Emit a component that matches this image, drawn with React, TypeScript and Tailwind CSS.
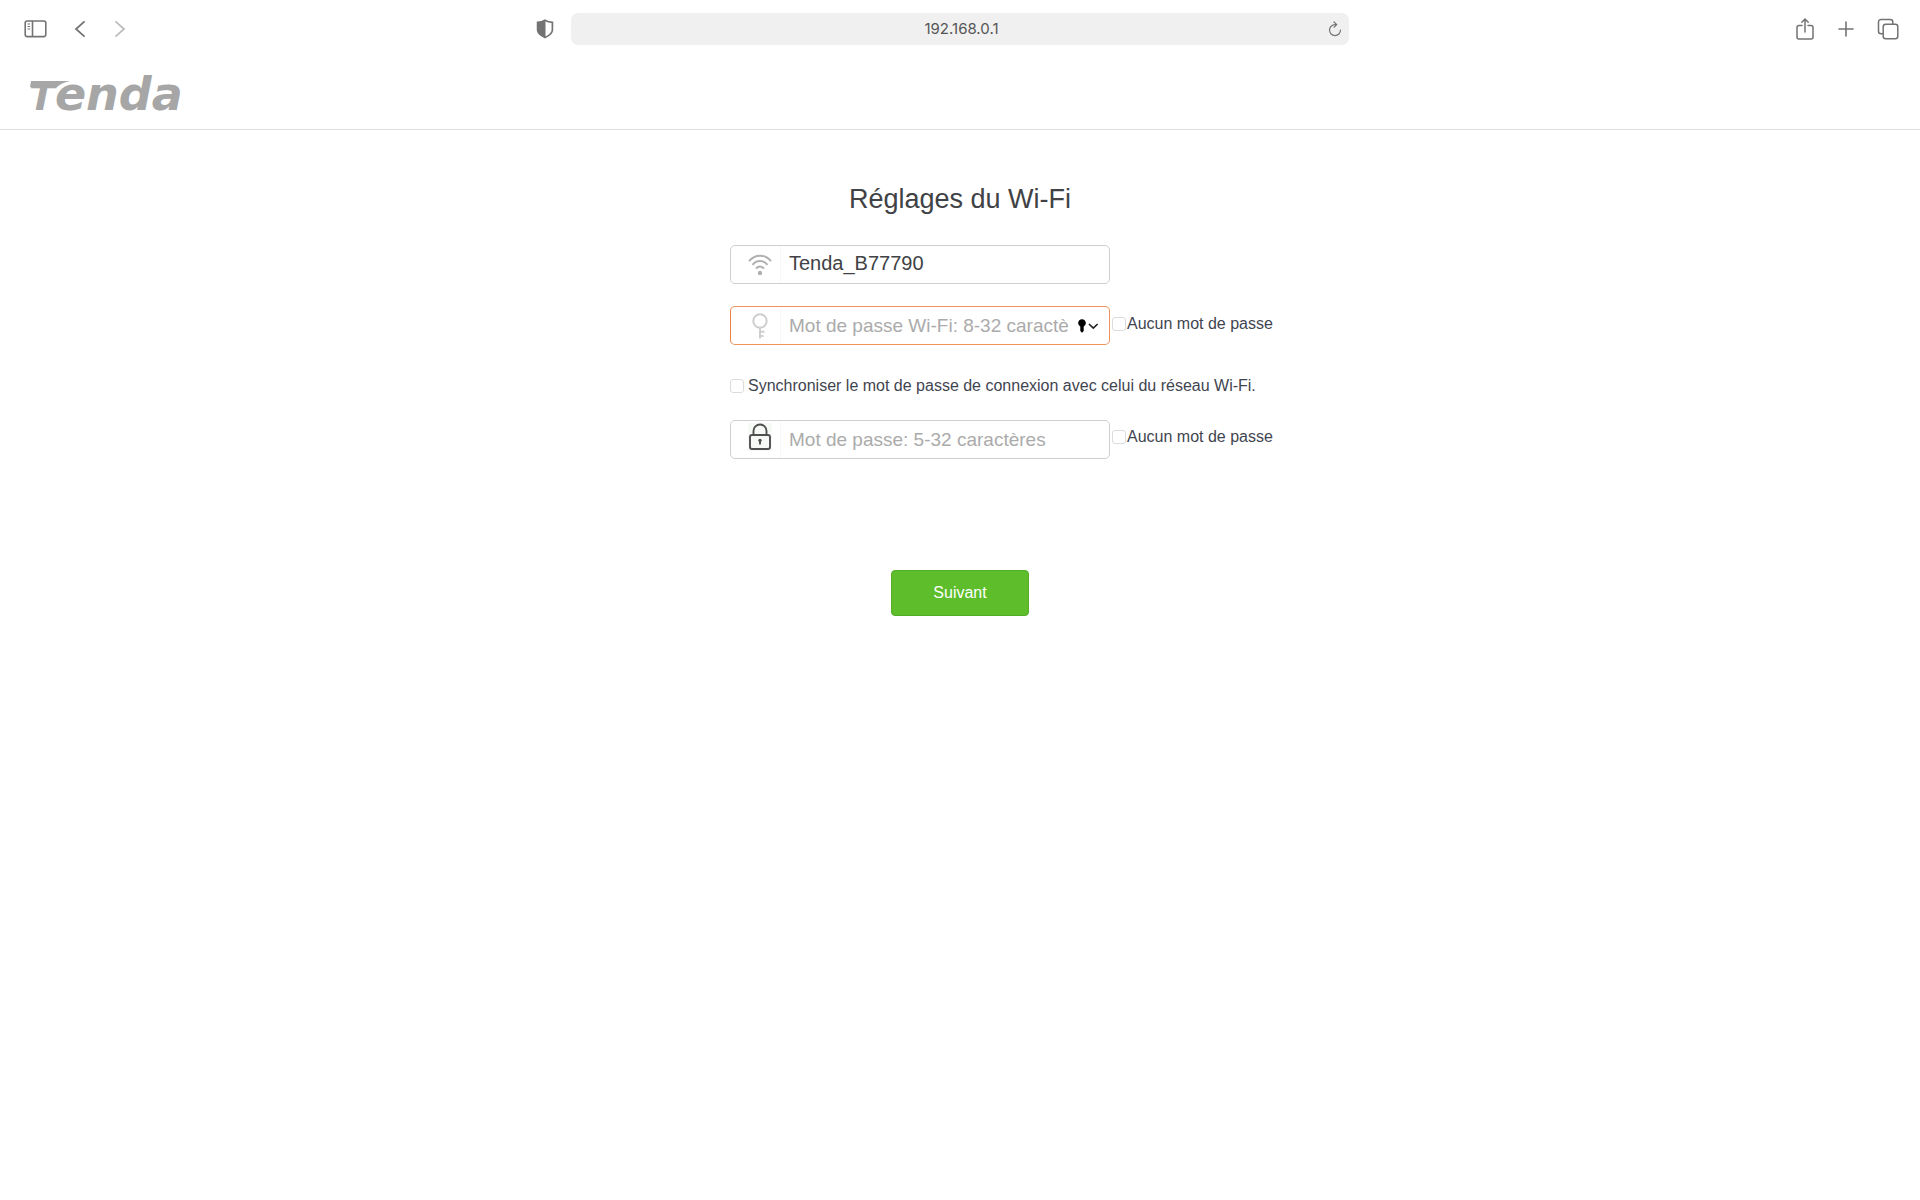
import React from "react";

type IconProps = { className?: string };

const SidebarIcon = ({ className }: IconProps) => (
  <svg viewBox="0 0 24 20" className={className} fill="none" stroke="currentColor" strokeWidth="1.6">
    <rect x="1.2" y="2" width="20.6" height="15.6" rx="2" />
    <path d="M8.500 2v15.600" />
    <path d="M3.500 5h2.600M3.500 7.500h2.600M3.500 10h2.600" strokeWidth="1.200" />
  </svg>
);

const ChevronIcon = ({ className }: IconProps) => (
  <svg viewBox="0 0 12 18" className={className} fill="none" stroke="currentColor" strokeWidth="1.8" strokeLinecap="round">
    <path d="M10 1.8L2 9l8 7.2" />
  </svg>
);

const ShieldIcon = ({ className }: IconProps) => (
  <svg viewBox="0 0 18 20" className={className}>
    <path d="M9 1.2C7 2.4 4 3.2 1.6 3.4V11c0 3.4 4 6 7.4 7.6 3.4-1.6 7.4-4.2 7.4-7.6V3.4C14 3.2 11 2.4 9 1.2z" fill="none" stroke="currentColor" strokeWidth="1.7" />
    <path d="M9.500 1.200C7 2.400 4 3.200 1.600 3.400V11c0 3.400 4 6 7.900 7.600z" fill="currentColor" />
  </svg>
);

const ReloadIcon = ({ className }: IconProps) => (
  <svg viewBox="0 0 14 16" className={className} fill="none" stroke="currentColor" strokeWidth="1.2" strokeLinecap="round" strokeLinejoin="round">
    <path d="M8.6 3.6H7a5.5 5.5 0 1 0 5.5 5.5M6 1l2.8 2.6L6 6.2" />
  </svg>
);

const ShareIcon = ({ className }: IconProps) => (
  <svg viewBox="0 0 18 22" className={className} fill="none" stroke="currentColor" strokeWidth="1.5" strokeLinecap="round" strokeLinejoin="round">
    <path d="M6 7.5H3a2 2 0 0 0-2 2V19a2 2 0 0 0 2 2h12a2 2 0 0 0 2-2V9.5a2 2 0 0 0-2-2h-3M9 14V1.2M5.8 4.2L9 1l3.2 3.2" />
  </svg>
);

const PlusIcon = ({ className }: IconProps) => (
  <svg viewBox="0 0 16 16" className={className} fill="none" stroke="currentColor" strokeWidth="1.6" strokeLinecap="round">
    <path d="M8 1v14M1 8h14" />
  </svg>
);

const TabsIcon = ({ className }: IconProps) => (
  <svg viewBox="0 0 22 22" className={className} fill="none" stroke="currentColor" strokeWidth="1.5">
    <rect x="6.2" y="6.2" width="14.6" height="14.6" rx="2.5" />
    <path d="M6.2 15.8H4a2.5 2.5 0 0 1-2.5-2.5V4A2.5 2.5 0 0 1 4 1.5h9.3A2.5 2.5 0 0 1 15.800 4v2.200" />
  </svg>
);

const WifiIcon = ({ className }: IconProps) => (
  <svg viewBox="0 0 24 22" className={className} fill="none" stroke="currentColor" strokeWidth="2">
    <path d="M1 7.2C7-0.2 17-0.2 23 7.2M4.5 10.8c4.2-5 10.8-5 15 0M8 14.6c2.4-2.8 5.6-2.8 8 0" />
    <circle cx="12" cy="19" r="2.2" fill="currentColor" stroke="none" />
  </svg>
);

const KeyIcon = ({ className }: IconProps) => (
  <svg viewBox="0 0 16 26" className={className} fill="none" stroke="currentColor" strokeWidth="2">
    <circle cx="8" cy="8" r="6.700" />
    <path d="M8 14.7V25.5M8 18.8h4.500M8 23h3.500" />
  </svg>
);

const LockIcon = ({ className }: IconProps) => (
  <svg viewBox="0 0 24 28" className={className} fill="none" stroke="currentColor" strokeWidth="1.9">
    <rect x="2" y="12" width="20" height="14" rx="2" />
    <path d="M5.500 12V8a6.500 6.500 0 0 1 13 0v4" />
    <circle cx="12" cy="17.500" r="1.700" fill="currentColor" stroke="none" />
    <path d="M12 17.500v4" />
  </svg>
);

const AutofillIcon = ({ className }: IconProps) => (
  <svg viewBox="0 0 20 14" className={className}>
    <path d="M4 0.3a3.800 3.800 0 0 1 1.700 7.200v4.600L4 13.700l-1.700-1.600V7.500A3.800 3.800 0 0 1 4 0.300z" fill="#000" />
    <path d="M11.500 5.500l3.800 3.600 3.800-3.600" fill="none" stroke="#222" strokeWidth="1.700" strokeLinecap="round" />
  </svg>
);

type FieldProps = {
  label: string;
  icon: React.ReactNode;
  border: string;
  trailing?: React.ReactNode;
  defaultValue?: string;
  placeholder?: string;
  text: string;
};

const Field = ({ label, icon, border, trailing, defaultValue, placeholder, text }: FieldProps) => (
  <div className={`flex h-[39px] w-[380px] shrink-0 items-center rounded-[5px] border bg-white ${border}`}>
    <span className="flex h-full w-[50px] shrink-0 items-center justify-end border-r border-[#f8f8f8] pr-2">{icon}</span>
    <input
      type="text"
      aria-label={label}
      defaultValue={defaultValue}
      placeholder={placeholder}
      className={`h-full min-w-0 flex-1 bg-transparent pl-2 text-[#404245] outline-none placeholder:text-[#ababab] ${text}`}
    />
    {trailing}
  </div>
);

const Check = ({ children, gap }: { children: string; gap: string }) => (
  <label className={`flex items-center whitespace-nowrap text-base leading-5 text-[#3f4550] ${gap}`}>
    <input type="checkbox" className="size-[14px] shrink-0 appearance-none rounded-[3px] border border-[#dcdcdc] bg-white" />
    {children}
  </label>
);

export default function App() {
  return (
    <div className="min-h-screen bg-white font-['Liberation_Sans',Arial,sans-serif]">
      <nav className="grid h-[58px] grid-cols-[1fr_minmax(0,778px)_1fr] items-center text-[#737373]">
        <div className="flex items-center pl-6">
          <button type="button" aria-label="Sidebar"><SidebarIcon className="h-5 w-6" /></button>
          <button type="button" aria-label="Back" className="ml-[26px]"><ChevronIcon className="h-[18px] w-3" /></button>
          <button type="button" aria-label="Forward" className="ml-7 text-[#bdbdbd]"><ChevronIcon className="h-[18px] w-3 rotate-180" /></button>
          <button type="button" aria-label="Privacy report" className="mr-[17px] ml-auto"><ShieldIcon className="h-5 w-[18px]" /></button>
        </div>
        <div className="flex h-8 items-center rounded-[7px] bg-[#f0f0f0] pr-[7px] pl-6">
          <input
            type="text"
            aria-label="Address"
            defaultValue="192.168.0.1"
            className="min-w-0 flex-1 bg-transparent text-center font-[Inter,sans-serif] text-[15px] text-[#555] outline-none"
          />
          <button type="button" aria-label="Reload"><ReloadIcon className="h-4 w-[14px]" /></button>
        </div>
        <div className="flex items-center justify-end pr-[21px]">
          <button type="button" aria-label="Share"><ShareIcon className="h-[22px] w-[18px]" /></button>
          <button type="button" aria-label="New tab" className="ml-6"><PlusIcon className="size-4" /></button>
          <button type="button" aria-label="Tabs" className="ml-[23px]"><TabsIcon className="size-[22px]" /></button>
        </div>
      </nav>

      <header className="flex h-[72px] items-center border-b border-[#dfdfdf] pt-1 pl-[29px]">
        <a href="#" className="relative flex items-baseline font-['DejaVu_Sans',sans-serif] font-bold text-[#a6a6a6] italic">
          <span className="text-[38px] leading-[44px]">T</span>
          <span className="text-[46px] leading-[44px]">enda</span>
          <svg viewBox="0 0 40 6" className="absolute top-[9px] left-px h-[6px] w-10" fill="currentColor" aria-hidden="true">
            <path d="M1 0h39c-5 1-10 3-13 6H0z" />
          </svg>
        </a>
      </header>

      <main className="mx-auto flex w-[460px] flex-col pt-[51px]">
        <h1 className="text-center text-[27px] leading-9 text-[#404245]">Réglages du Wi-Fi</h1>
        <form className="flex flex-col">
          <div className="mt-7 flex">
            <Field
              label="Nom du réseau Wi-Fi"
              border="border-[#cfcfcf]"
              text="pb-[2px] text-[20px]"
              defaultValue="Tenda_B77790"
              icon={<WifiIcon className="h-[22px] w-6 text-[#b0b0b0]" />}
            />
          </div>
          <div className="mt-[22px] flex items-start gap-[2px]">
            <Field
              label="Mot de passe Wi-Fi"
              border="border-[#f0935c] border-l-[#ee8040]"
              text="pt-px text-[19px]"
              placeholder="Mot de passe Wi-Fi: 8-32 caractères"
              icon={<KeyIcon className="mr-1 h-[26px] w-4 text-[#cfcfcf]" />}
              trailing={<button type="button" aria-label="Remplissage automatique" className="mr-[11px] ml-[9px]"><AutofillIcon className="h-[14px] w-5" /></button>}
            />
            <div className="pt-2"><Check gap="gap-px">Aucun mot de passe</Check></div>
          </div>
          <div className="mt-[31px] flex"><Check gap="gap-1">Synchroniser le mot de passe de connexion avec celui du réseau Wi-Fi.</Check></div>
          <div className="mt-6 flex items-start gap-[2px]">
            <Field
              label="Mot de passe"
              border="border-[#cfcfcf]"
              text="pt-px text-[19px]"
              placeholder="Mot de passe: 5-32 caractères"
              icon={<LockIcon className="mb-[6px] h-7 w-6 bg-[#f7f9f7] text-[#505050]" />}
            />
            <div className="pt-[7px]"><Check gap="gap-px">Aucun mot de passe</Check></div>
          </div>
          <button type="button" className="mt-[111px] h-[46px] w-[138px] self-center rounded-[4px] border border-[#53ad25] bg-[#5dbd2a] text-base text-white">
            Suivant
          </button>
        </form>
      </main>
    </div>
  );
}
